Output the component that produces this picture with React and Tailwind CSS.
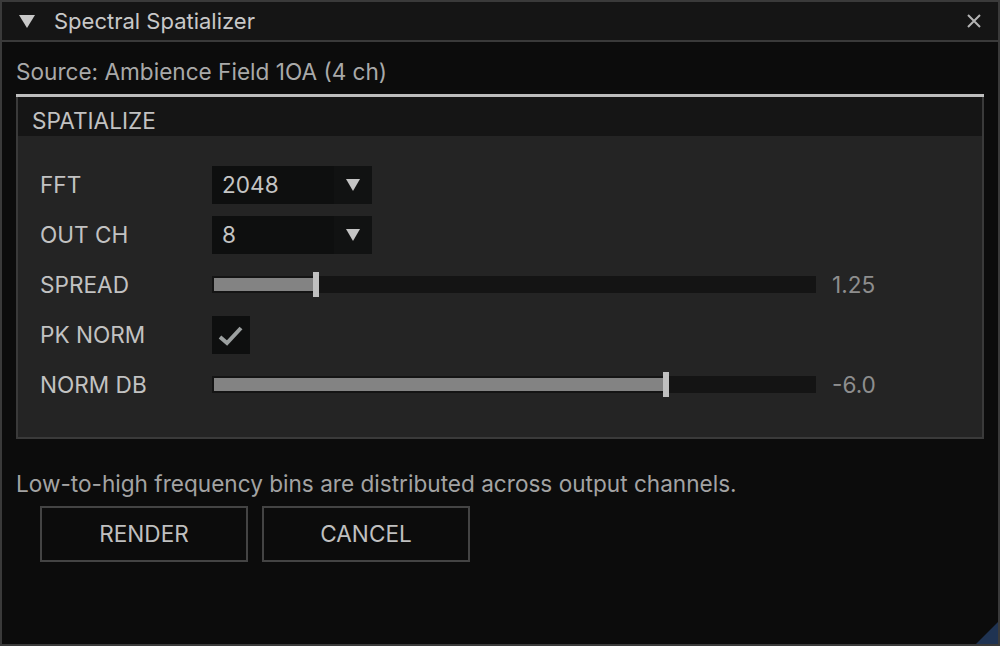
const font = { fontFamily: 'Inter, "Noto Sans", sans-serif' };

function Combo({ value }) {
  return (
    <div className="flex h-[38px] w-[160px] bg-[#0e0f0f]">
      <div className="flex flex-1 items-center pl-[10px] text-[22.6px] text-[#c4c4c4]">{value}</div>
      <div className="flex w-[38px] items-center justify-center bg-[#111212]">
        <svg width="16" height="14" viewBox="0 0 16 14">
          <polygon points="1,1 15,1 8,13" fill="#c4c4c4" />
        </svg>
      </div>
    </div>
  );
}

function Slider({ pct, value }) {
  return (
    <div className="flex items-center gap-4">
      <div className="relative h-[17px] w-[604px] bg-[#141414] p-[2px]">
        <div className="h-full bg-[#838383]" style={{ width: `${pct}%` }} />
        <div
          className="absolute top-[-4px] h-[25px] w-[6px] bg-[#c0c0c0]"
          style={{ left: `calc(${pct}% - 2px)` }}
        />
      </div>
      <span className="text-[22.6px] text-[#8e8e8e]">{value}</span>
    </div>
  );
}

function Row({ label, children }) {
  return (
    <div className="flex h-[38px] items-center">
      <div className="w-[172px] text-[22.6px] text-[#c2c2c2]">{label}</div>
      {children}
    </div>
  );
}

export default function App() {
  return (
    <div
      className="relative flex h-[646px] w-[1000px] flex-col overflow-hidden border-2 border-[#3a3a3a] bg-[#0c0c0c]"
      style={font}
    >
      <div className="flex h-[40px] shrink-0 items-center border-b-2 border-[#3a3a3a] bg-[#151515] pl-[16px] pr-[16px]">
        <svg width="18" height="15" viewBox="0 0 18 15">
          <polygon points="1,1 17,1 9,14" fill="#c8c8c8" />
        </svg>
        <span className="ml-[18px] text-[22px] text-[#c8c8c8]">Spectral Spatializer</span>
        <svg className="ml-auto" width="16" height="16" viewBox="0 0 16 16">
          <path d="M2 2 L14 14 M14 2 L2 14" stroke="#b4b4b4" strokeWidth="2" />
        </svg>
      </div>

      <div className="flex flex-col px-[14px] pt-[16px]">
        <div className="text-[22.6px] leading-[28px] text-[#a9a9a9]">Source: Ambience Field 1OA (4 ch)</div>

        <div className="mt-[8px] flex flex-col">
          <div className="h-[3px] bg-[#bdbdbd]" />
          <div className="flex flex-col border-x-2 border-b-2 border-[#3a3a3a]">
            <div className="flex h-[39px] items-center bg-[#151515] pl-[14px] pt-[9px] text-[22.6px] text-[#c2c2c2]">
              SPATIALIZE
            </div>
            <div className="flex flex-col gap-[12px] bg-[#242424] pb-[33px] pl-[22px] pt-[30px]">
              <Row label="FFT">
                <Combo value="2048" />
              </Row>
              <Row label="OUT CH">
                <Combo value="8" />
              </Row>
              <Row label="SPREAD">
                <Slider pct={17} value="1.25" />
              </Row>
              <Row label="PK NORM">
                <div className="flex h-[38px] w-[38px] items-center justify-center bg-[#0e0f0f]">
                  <svg width="28" height="24" viewBox="0 0 28 24">
                    <path d="M3 14 L10 20 L24 5" fill="none" stroke="#9ca0a0" strokeWidth="4" />
                  </svg>
                </div>
              </Row>
              <Row label="NORM DB">
                <Slider pct={75} value="-6.0" />
              </Row>
            </div>
          </div>
        </div>

        <div className="mt-[31px] text-[22.6px] leading-[28px] text-[#a3a3a3]">
          Low-to-high frequency bins are distributed across output channels.
        </div>

        <div className="ml-[24px] mt-[8px] flex gap-[14px]">
          <button className="flex h-[56px] w-[208px] items-center justify-center border-2 border-[#444444] bg-[#0c0c0c] text-[22.6px] text-[#c0c0c0]">
            RENDER
          </button>
          <button className="flex h-[56px] w-[208px] items-center justify-center border-2 border-[#444444] bg-[#0c0c0c] text-[22.6px] text-[#c0c0c0]">
            CANCEL
          </button>
        </div>
      </div>

      <svg className="absolute bottom-0 right-0" width="22" height="22" viewBox="0 0 22 22">
        <polygon points="22,0 22,22 0,22" fill="#1f3352" />
      </svg>
    </div>
  );
}
